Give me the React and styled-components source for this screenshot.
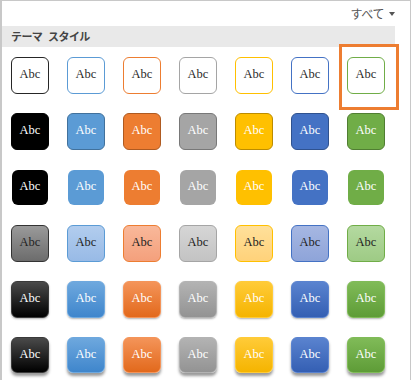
import React from "react";
import styled, { createGlobalStyle, css } from "styled-components";

const GlobalStyle = createGlobalStyle`
  html, body { margin: 0; padding: 0; background: #ffffff; }
  body { font-family: "Noto Sans CJK JP", "Noto Sans", sans-serif; }
`;

const accents = [
  { base: "#000000", dark: "#000000", border1: "#262626", top: "#4a4a4a", bottom: "#000000", tintTop: "#9a9a9a", tintBot: "#6c6c6c", tintBorder: "#333333", tintText: "#222222" },
  { base: "#5b9bd5", dark: "#41719c", border1: "#5b9bd5", top: "#6ea8de", bottom: "#3f86cc", tintTop: "#b2cdee", tintBot: "#98bae6", tintBorder: "#5b9bd5", tintText: "#222222" },
  { base: "#ed7d31", dark: "#ae5a21", border1: "#ed7d31", top: "#f49459", bottom: "#e2691c", tintTop: "#f9b89a", tintBot: "#f4a07c", tintBorder: "#ed7d31", tintText: "#222222" },
  { base: "#a5a5a5", dark: "#787878", border1: "#a5a5a5", top: "#b3b3b3", bottom: "#939393", tintTop: "#d6d6d6", tintBot: "#c3c3c3", tintBorder: "#a5a5a5", tintText: "#222222" },
  { base: "#ffc000", dark: "#bc8c00", border1: "#ffc000", top: "#ffcb38", bottom: "#f5b400", tintTop: "#ffe09a", tintBot: "#ffd27a", tintBorder: "#ffc000", tintText: "#222222" },
  { base: "#4472c4", dark: "#2f528f", border1: "#4472c4", top: "#5a83cf", bottom: "#345fb3", tintTop: "#a6b7e2", tintBot: "#8ea4d9", tintBorder: "#4472c4", tintText: "#222222" },
  { base: "#70ad47", dark: "#507e32", border1: "#70ad47", top: "#80bb58", bottom: "#5e9c37", tintTop: "#b4d9a0", tintBot: "#9ecb85", tintBorder: "#70ad47", tintText: "#222222" },
];

const rowStyles = [
  (a) => css`
    background: #ffffff;
    border: 1px solid ${a.border1};
    color: #2a2a2a;
  `,
  (a) => css`
    background: ${a.base};
    border: 1px solid ${a.dark};
    color: #ffffff;
  `,
  (a) => css`
    width: 36px;
    height: 35px;
    background: ${a.base};
    border: none;
    color: #ffffff;
  `,
  (a) => css`
    background: linear-gradient(${a.tintTop}, ${a.tintBot});
    border: 1px solid ${a.tintBorder};
    color: ${a.tintText};
  `,
  (a) => css`
    background: linear-gradient(${a.top}, ${a.bottom});
    border: 1px solid ${a.base === "#000000" ? "#3a3a3a" : a.top};
    color: #ffffff;
    box-shadow: 0 1px 2px rgba(0, 0, 0, 0.3);
  `,
  (a) => css`
    height: 36px;
    align-self: start;
    background: linear-gradient(${a.top}, ${a.bottom});
    border: 1px solid ${a.base === "#000000" ? "#3a3a3a" : a.top};
    color: #ffffff;
    box-shadow: 0 3px 3px rgba(0, 0, 0, 0.4);
  `,
];

const Panel = styled.div`
  box-sizing: border-box;
  width: 411px;
  height: 380px;
  overflow: hidden;
  border: 1px solid #c8c8c8;
  border-left-width: 2px;
  border-bottom: none;
  background: #ffffff;
`;

const Header = styled.div`
  height: 25px;
  display: flex;
  align-items: center;
  justify-content: flex-end;
  padding-right: 15px;
  gap: 5px;
  color: #555555;
  font-size: 12px;
  font-feature-settings: "palt";
`;

const Caret = styled.span`
  width: 0;
  height: 0;
  border-left: 3.5px solid transparent;
  border-right: 3.5px solid transparent;
  border-top: 4px solid #555555;
  margin-top: 1px;
`;

const Band = styled.div`
  height: 21px;
  margin-right: 15px;
  background: #e9e9e9;
  padding-left: 9px;
  font-size: 11px;
  font-weight: bold;
  line-height: 21px;
  color: #444444;
  letter-spacing: -0.6px;
  word-spacing: 4px;
`;

const Grid = styled.div`
  display: grid;
  grid-template-columns: repeat(7, 38px);
  grid-auto-rows: 37px;
  column-gap: 18px;
  row-gap: 19px;
  padding: 10px 0 0 9px;
`;

const Cell = styled.div`
  position: relative;
  display: flex;
  align-items: center;
  justify-content: center;
  ${(p) =>
    p.$selected &&
    css`
      &::after {
        content: "";
        position: absolute;
        left: -8px;
        right: -14px;
        top: -13px;
        bottom: -16px;
        border: 3px solid #ed7d31;
        pointer-events: none;
      }
    `}
`;

const Tile = styled.div`
  box-sizing: border-box;
  width: 38px;
  height: 37px;
  border-radius: 6px;
  display: flex;
  align-items: center;
  justify-content: center;
  padding-bottom: 2px;
  font-family: "Liberation Serif", "DejaVu Serif", serif;
  font-size: 12.5px;
  ${(p) => rowStyles[p.$row](accents[p.$c])}
`;

export default function App() {
  const rows = [0, 1, 2, 3, 4, 5];
  return (
    <>
      <GlobalStyle />
      <Panel>
        <Header>
          <span>すべて</span>
          <Caret />
        </Header>
        <Band>テーマ スタイル</Band>
        <Grid>
          {rows.map((r) =>
            accents.map((_, c) => (
              <Cell key={`${r}-${c}`} $selected={r === 0 && c === 6}>
                <Tile $row={r} $c={c}>
                  Abc
                </Tile>
              </Cell>
            ))
          )}
        </Grid>
      </Panel>
    </>
  );
}
